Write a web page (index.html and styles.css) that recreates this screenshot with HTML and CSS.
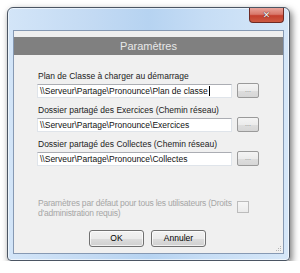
FILE: index.html
```html
<!DOCTYPE html>
<html lang="fr">
<head>
<meta charset="utf-8">
<title>Paramètres</title>
<link rel="stylesheet" href="styles.css">
</head>
<body>
<div class="window">
  <div class="titlebar">
    <div class="close"><span class="x">✕</span></div>
  </div>
  <div class="client">
    <div class="strip"></div>
    <div class="header">Paramètres</div>
    <div class="content">
      <div class="group">
        <div class="label">Plan de Classe à charger au démarrage</div>
        <div class="row">
          <div class="input">\\Serveur\Partage\Pronounce\Plan de classe<span class="caret"></span></div>
          <div class="browse">...</div>
        </div>
      </div>
      <div class="group">
        <div class="label">Dossier partagé des Exercices (Chemin réseau)</div>
        <div class="row">
          <div class="input">\\Serveur\Partage\Pronounce\Exercices</div>
          <div class="browse">...</div>
        </div>
      </div>
      <div class="group">
        <div class="label">Dossier partagé des Collectes (Chemin réseau)</div>
        <div class="row">
          <div class="input">\\Serveur\Partage\Pronounce\Collectes</div>
          <div class="browse">...</div>
        </div>
      </div>
      <div class="defaults">
        <div class="dtext">Paramètres par défaut pour tous les utilisateurs (Droits<br>d'administration requis)</div>
        <div class="check"></div>
      </div>
      <div class="actions">
        <div class="btn">OK</div>
        <div class="btn">Annuler</div>
      </div>
    </div>
    <svg class="grip" width="6" height="6" viewBox="0 0 6 6">
      <rect x="4" y="0" width="1" height="1" fill="#b4b4b4"/>
      <rect x="2" y="2" width="1" height="1" fill="#b4b4b4"/>
      <rect x="4" y="2" width="1" height="1" fill="#b4b4b4"/>
      <rect x="0" y="4" width="1" height="1" fill="#b4b4b4"/>
      <rect x="2" y="4" width="1" height="1" fill="#b4b4b4"/>
      <rect x="4" y="4" width="1" height="1" fill="#b4b4b4"/>
    </svg>
  </div>
</div>
</body>
</html>
```
FILE: styles.css
```css
html, body {
  margin: 0;
  padding: 0;
  background: #ffffff;
}
body {
  font-family: "Liberation Sans", Arial, sans-serif;
  font-size: 8.5px;
  color: #222222;
}
.window {
  box-sizing: border-box;
  margin: 7px 0 0 7px;
  width: 283px;
  height: 254px;
  border: 1px solid #4b5563;
  border-radius: 6px 6px 4px 4px;
  background: linear-gradient(to right, #d3e5f8 0%, #c3daf3 30%, #b6d3f1 50%, #c6ddf5 70%, #d6e7f8 100%);
  box-shadow: 2px 3px 7px rgba(0, 0, 0, 0.55), inset 0 0 0 1px rgba(255, 255, 255, 0.6);
  padding: 0 5px 6px 5px;
  display: flex;
  flex-direction: column;
}
.titlebar {
  height: 22px;
  display: flex;
  justify-content: flex-end;
  align-items: flex-start;
  flex-shrink: 0;
}
.close {
  box-sizing: border-box;
  width: 35px;
  height: 15px;
  border: 1px solid #6e2a24;
  border-top: none;
  border-radius: 0 0 4px 4px;
  background: linear-gradient(to bottom, #eaa49b 0%, #d8786b 45%, #c43f2e 55%, #cc5a42 100%);
  display: flex;
  justify-content: center;
  align-items: center;
}
.x {
  color: #ffffff;
  font-family: "DejaVu Sans", sans-serif;
  font-size: 9px;
  font-weight: bold;
  line-height: 1;
  text-shadow: 0 0 1px #4a1a14, 0 0 1px #4a1a14;
}
.client {
  flex: 1;
  position: relative;
  background: #f0f0f0;
  border: 1px solid #8699b3;
  display: flex;
  flex-direction: column;
}
.strip {
  height: 6px;
  background: #efefef;
  flex-shrink: 0;
}
.header {
  height: 18px;
  background: #808080;
  color: #e8e8e8;
  font-size: 11px;
  line-height: 18px;
  text-align: center;
  flex-shrink: 0;
}
.content {
  padding: 15px 0 0 23px;
  display: flex;
  flex-direction: column;
}
.group {
  display: flex;
  flex-direction: column;
  margin-bottom: 6px;
}
.label {
  line-height: 12px;
  height: 12px;
  padding-left: 1px;
  margin-bottom: 1px;
  white-space: nowrap;
}
.row {
  display: flex;
  align-items: center;
  gap: 5px;
  height: 15px;
}
.input {
  box-sizing: border-box;
  width: 195px;
  height: 14px;
  background: #ffffff;
  border: 1px solid #dfe4ea;
  border-top-color: #abadb3;
  padding-left: 2px;
  line-height: 12px;
  color: #111111;
  white-space: nowrap;
  display: flex;
  align-items: center;
}
.caret {
  display: inline-block;
  width: 1px;
  height: 10px;
  background: #000000;
  margin-left: 1px;
}
.browse {
  box-sizing: border-box;
  width: 22px;
  height: 15px;
  border: 1px solid #9a9a9a;
  border-radius: 2px;
  background: linear-gradient(to bottom, #f4f4f4 0%, #ececec 50%, #dedede 51%, #d6d6d6 100%);
  color: #8a8a8a;
  font-size: 7px;
  line-height: 11px;
  text-align: center;
}
.defaults {
  display: flex;
  gap: 5px;
  margin-top: 26px;
}
.dtext {
  width: 195px;
  padding-left: 1px;
  box-sizing: border-box;
  line-height: 10px;
  color: #a6a6a6;
  letter-spacing: -0.22px;
  white-space: nowrap;
  overflow: hidden;
}
.check {
  box-sizing: border-box;
  width: 12px;
  height: 12px;
  margin-top: 3px;
  border: 1px solid #bcbcbc;
  background: linear-gradient(to bottom, #f6f6f6, #ebebeb);
}
.actions {
  display: flex;
  gap: 7px;
  padding-left: 52px;
  margin-top: 12px;
}
.btn {
  box-sizing: border-box;
  width: 55px;
  height: 17px;
  border: 1px solid #707070;
  border-radius: 3px;
  background: linear-gradient(to bottom, #f2f2f2 0%, #ebebeb 50%, #dddddd 51%, #cfcfcf 100%);
  box-shadow: inset 0 0 0 1px rgba(255, 255, 255, 0.7);
  text-align: center;
  line-height: 15px;
  color: #000000;
}
.grip {
  position: absolute;
  right: 1px;
  bottom: 1px;
}
```
